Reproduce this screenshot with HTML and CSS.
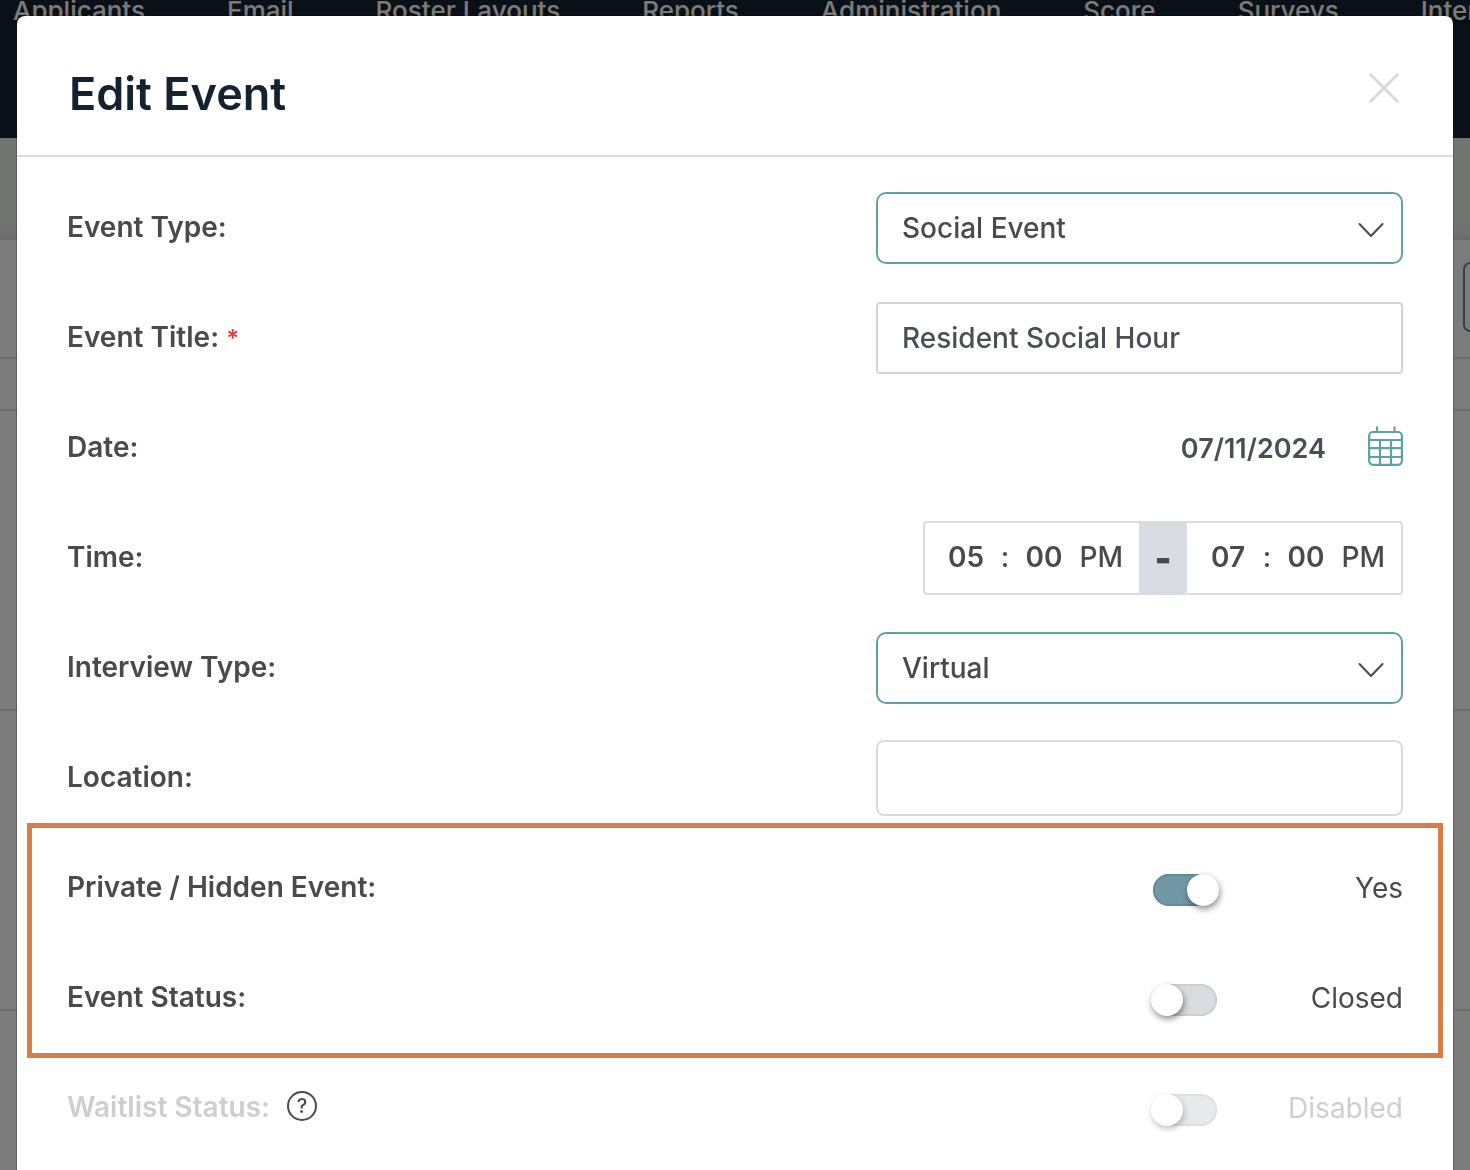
FILE: index.html
```html
<!DOCTYPE html>
<html lang="en">
<head>
<meta charset="utf-8">
<title>Edit Event</title>
<link rel="stylesheet" href="styles.css">
</head>
<body>
<div class="page">
  <nav class="nav">
    <a href="#">Applicants</a>
    <a href="#">Email</a>
    <a href="#">Roster Layouts</a>
    <a href="#">Reports</a>
    <a href="#">Administration</a>
    <a href="#">Score</a>
    <a href="#">Surveys</a>
    <a href="#">Interviews</a>
  </nav>
  <div class="banner"></div>
  <div class="toolbar"><button class="toolbar-button" type="button" aria-label="Actions"></button></div>
  <div class="list-head"></div>
  <div class="list-row"></div>
  <div class="list-row"></div>
</div>

<div class="overlay">
  <form class="modal" role="dialog" aria-labelledby="modal-title">
    <header class="modal-header">
      <h1 class="modal-title" id="modal-title">Edit Event</h1>
      <button class="close" type="button" aria-label="Close">
        <svg width="32" height="32" viewBox="0 0 32 32" fill="none" stroke="currentColor" stroke-width="3" stroke-linecap="round"><path d="M2.500 2.500 29.500 29.500M29.500 2.500 2.500 29.500"/></svg>
      </button>
    </header>

    <div class="modal-body">
      <div class="row">
        <label class="label" for="event-type">Event Type:</label>
        <div class="control select">
          <select class="field field-accent" id="event-type"><option>Social Event</option></select>
          <svg class="chevron" width="26" height="16" viewBox="0 0 26 16" fill="none" stroke="currentColor" stroke-width="2" stroke-linecap="round" stroke-linejoin="round"><path d="M1.500 2 13 14 24.500 2"/></svg>
        </div>
      </div>

      <div class="row">
        <label class="label" for="event-title">Event Title: <span class="required">*</span></label>
        <div class="control"><input class="field" id="event-title" type="text" value="Resident Social Hour"></div>
      </div>

      <div class="row">
        <label class="label" for="date">Date:</label>
        <div class="control date">
          <input class="date-input" id="date" type="text" value="07/11/2024">
          <button class="icon-button" type="button" aria-label="Choose date">
            <svg width="35" height="40" viewBox="0 0 35 40" fill="none" stroke="currentColor" stroke-width="2.200"><rect x="1.100" y="6" width="32.800" height="32.800" rx="4"/><path d="M9 .5V6M26.500 .5V6M1 14h33M1 22.200h33M1 31h33M12 14v25M23 14v25"/></svg>
          </button>
        </div>
      </div>

      <div class="row">
        <label class="label" for="start-hour">Time:</label>
        <div class="time">
          <div class="time-part">
            <input class="digits" id="start-hour" type="text" value="05">
            <span class="colon">:</span>
            <input class="digits" type="text" value="00" aria-label="Start minute">
            <button class="meridiem" type="button">PM</button>
          </div>
          <span class="time-sep">-</span>
          <div class="time-part">
            <input class="digits" type="text" value="07" aria-label="End hour">
            <span class="colon">:</span>
            <input class="digits" type="text" value="00" aria-label="End minute">
            <button class="meridiem" type="button">PM</button>
          </div>
        </div>
      </div>

      <div class="row">
        <label class="label" for="interview-type">Interview Type:</label>
        <div class="control select">
          <select class="field field-accent" id="interview-type"><option>Virtual</option></select>
          <svg class="chevron" width="26" height="16" viewBox="0 0 26 16" fill="none" stroke="currentColor" stroke-width="2" stroke-linecap="round" stroke-linejoin="round"><path d="M1.500 2 13 14 24.500 2"/></svg>
        </div>
      </div>

      <div class="row">
        <label class="label" for="location">Location:</label>
        <div class="control"><input class="field field-location" id="location" type="text"></div>
      </div>

      <div class="highlight">
        <div class="row">
          <label class="label" for="private">Private / Hidden Event:</label>
          <div class="switch">
            <input class="toggle" id="private" type="checkbox" checked>
            <span class="state">Yes</span>
          </div>
        </div>
        <div class="row">
          <label class="label" for="status">Event Status:</label>
          <div class="switch">
            <input class="toggle" id="status" type="checkbox">
            <span class="state">Closed</span>
          </div>
        </div>
      </div>

      <div class="row">
        <div class="label-group">
          <label class="label muted" for="waitlist">Waitlist Status:</label>
          <button class="help" type="button" aria-label="About waitlist status">?</button>
        </div>
        <div class="switch">
          <input class="toggle" id="waitlist" type="checkbox" disabled>
          <span class="state muted">Disabled</span>
        </div>
      </div>
    </div>
  </form>
</div>
</body>
</html>
```
FILE: styles.css
```css
* {
  box-sizing: border-box;
}

body {
  margin: 0;
  font-family: Inter, "Liberation Sans", sans-serif;
  font-size: 28px;
  color: #4a4a4a;
  overflow: hidden;
}

button,
input,
select {
  margin: 0;
  padding: 0;
  border: 0;
  background: none;
  font: inherit;
  color: inherit;
}

/* Page behind the dialog */
.page {
  min-height: 100vh;
  background: #f8f8f8;
  overflow: hidden;
}

.nav {
  display: flex;
  gap: 82px;
  height: 138px;
  padding-left: 13px;
  background: #142131;
  white-space: nowrap;
}

.nav a {
  font-size: 26px;
  line-height: 22px;
  font-weight: 500;
  color: #fbf6f0;
  text-decoration: none;
}

.banner {
  height: 102px;
  background: linear-gradient(#e5e8e5 85%, #dadadc);
  border-bottom: 2px solid #d2d2d6;
}

.toolbar {
  display: flex;
  justify-content: flex-end;
  padding: 22px 0 25px;
  border-bottom: 2px solid #d8d8d8;
}

.toolbar-button {
  width: 7px;
  height: 70px;
  border: 2px solid #5b8a94;
  border-right: 0;
  border-radius: 8px 0 0 8px;
}

.list-head {
  height: 52px;
  border-bottom: 2px solid #d8d8d8;
}

.list-row {
  height: 300px;
  border-bottom: 2px solid #d8d8d8;
}

/* Dialog */
.overlay {
  position: fixed;
  inset: 0;
  display: flex;
  padding: 16px 17px 0;
  background: rgba(0, 0, 0, 0.5);
  overflow: hidden;
}

.modal {
  flex: 1;
  background: #fff;
  border-radius: 8px 8px 0 0;
  box-shadow: 0 0 0 1px rgba(0, 0, 0, 0.2);
}

.modal-header {
  display: flex;
  align-items: center;
  justify-content: space-between;
  height: 141px;
  padding: 4px 53px 0 52px;
  border-bottom: 2px solid #d9dde2;
}

.modal-title {
  margin: 0;
  padding-top: 12px;
  font-size: 45px;
  line-height: 56px;
  font-weight: 600;
  color: #142131;
}

.close {
  display: flex;
  color: #d9dadb;
}

.modal-body {
  padding: 16px 50px 0;
}

.row {
  display: flex;
  align-items: center;
  justify-content: space-between;
  height: 110px;
}

.label {
  padding-bottom: 2px;
  line-height: 36px;
  font-weight: 600;
}

.label-group {
  display: flex;
  align-items: center;
  gap: 17px;
}

.required {
  font-size: 24px;
  line-height: 24px;
  color: #d9413a;
}

.muted {
  color: #cdced0;
}

.control {
  flex: 0 1 527px;
}

.field {
  display: block;
  width: 100%;
  height: 72px;
  padding: 0 24px;
  border: 2px solid #cfd4d9;
  border-radius: 4px;
  background: #fff;
  font-weight: 500;
  color: #4a4f57;
}

.field-accent {
  appearance: none;
  border-color: #5fa1a5;
  border-radius: 10px;
  color: #4a4a4a;
}

.field-location {
  height: 76px;
  border-color: #d9dce2;
  border-radius: 8px;
}

.select {
  position: relative;
}

.chevron {
  position: absolute;
  top: 30px;
  right: 19px;
  pointer-events: none;
}

.date {
  display: flex;
  align-items: center;
  justify-content: flex-end;
  gap: 42px;
}

.date-input {
  width: 200px;
  font-size: 27px;
  font-weight: 600;
  color: #4a4f57;
  text-align: right;
}

.icon-button {
  display: flex;
  padding-bottom: 4px;
  color: #5fa1a5;
}

.time {
  display: flex;
  height: 74px;
  border: 2px solid #d9dce2;
  border-radius: 4px;
  font-weight: 600;
}

.time-part {
  display: flex;
  align-items: center;
  padding: 0 16px 2px 20px;
}

.digits {
  width: 42px;
  text-align: center;
}

.colon {
  width: 36px;
  font-weight: 500;
  text-align: center;
}

.meridiem {
  width: 58px;
  font-weight: 500;
  text-align: right;
}

.time-sep {
  width: 48px;
  background: #d9dce2;
  line-height: 70px;
  font-weight: 900;
  font-size: 36px;
  text-align: center;
}

/* Callout frame around the two visibility rows */
.highlight {
  position: relative;
}

.highlight::after {
  content: "";
  position: absolute;
  inset: -10px -40px -5px;
  border: 5px solid #d67d48;
  pointer-events: none;
}

.switch {
  display: flex;
  align-items: center;
}

.toggle {
  appearance: none;
  width: 64px;
  height: 32px;
  margin-top: 4px;
  border-radius: 16px;
  background: #d8dbe0;
  box-shadow: inset 0 0 0 2px #cbced3;
}

.toggle::before {
  content: "";
  display: block;
  width: 32px;
  height: 32px;
  margin-left: -2px;
  border-radius: 50%;
  background: #fff;
  box-shadow: 1px 3px 6px rgba(0, 0, 0, 0.45);
}

.toggle:checked {
  background: #7298a6;
  box-shadow: inset 0 0 0 2px #628c9b;
}

.toggle:checked::before {
  margin-left: 34px;
}

.toggle:disabled {
  background: #e8e9eb;
  box-shadow: inset 0 0 0 2px #dfe0e4;
}

.toggle:disabled::before {
  box-shadow: 1px 3px 6px rgba(0, 0, 0, 0.25);
}

.state {
  width: 186px;
  text-align: right;
}

.help {
  width: 30px;
  height: 30px;
  margin-bottom: 4px;
  border: 2px solid #4a4a4a;
  border-radius: 50%;
  font-size: 20px;
  line-height: 26px;
  font-weight: 500;
}
```
